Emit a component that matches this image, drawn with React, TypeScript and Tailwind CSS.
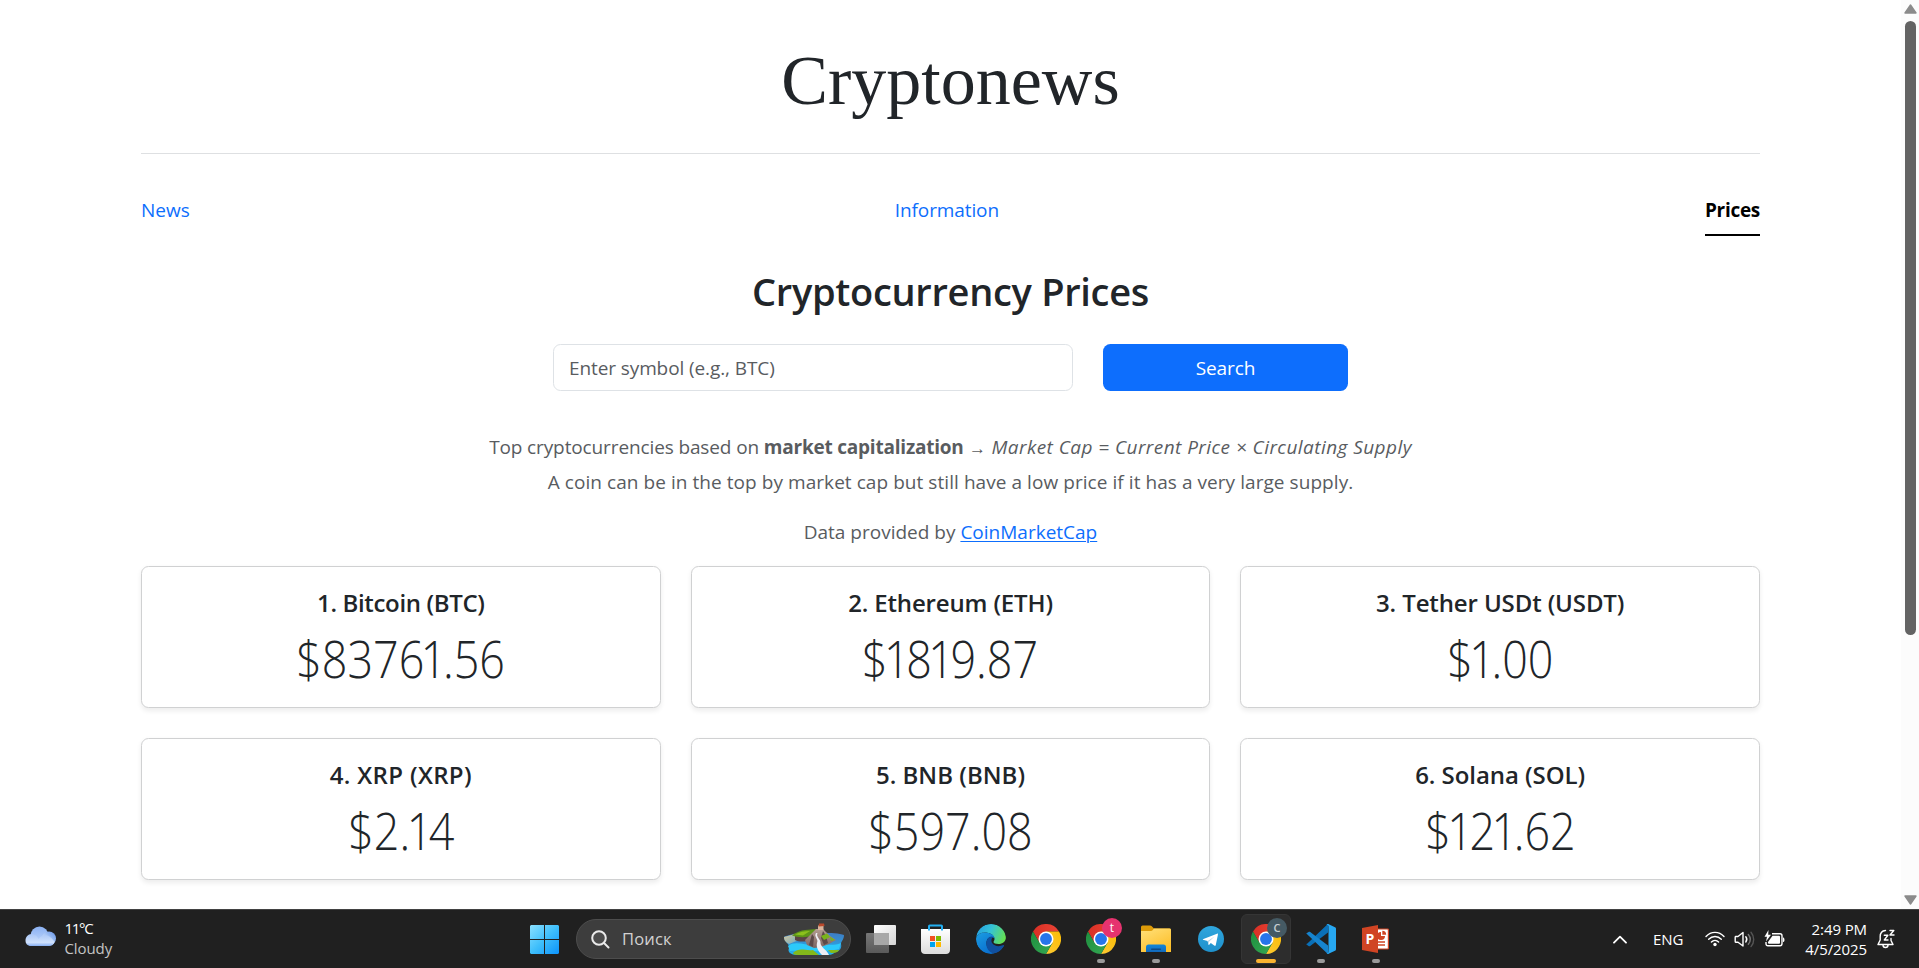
import React from "react";

const coins = [
  { title: "1. Bitcoin (BTC)", price: "$83761.56", tracking: "tracking-[-0.35px]" },
  { title: "2. Ethereum (ETH)", price: "$1819.87", tracking: "tracking-[-0.15px]" },
  { title: "3. Tether USDt (USDT)", price: "$1.00", tracking: "tracking-[-0.12px]" },
  { title: "4. XRP (XRP)", price: "$2.14", tracking: "tracking-[0.35px]" },
  { title: "5. BNB (BNB)", price: "$597.08", tracking: "tracking-[0.02px]" },
  { title: "6. Solana (SOL)", price: "$121.62", tracking: "tracking-[-0.05px]" },
];

function Price({ value }: { value: string }) {
  return (
    <p className="w-max origin-center scale-x-[0.88] text-[51px] leading-[60px] font-light whitespace-nowrap">
      {value.split("").map((c, i) =>
        c === "1" ? (
          <span key={i} className="-ml-[4px] tracking-[-4px]">{c}</span>
        ) : (
          <React.Fragment key={i}>{c}</React.Fragment>
        ),
      )}
    </p>
  );
}

function CoinCard({ title, price, tracking }: { title: string; price: string; tracking: string }) {
  return (
    <div className="flex h-[142px] flex-col items-center rounded-[7.5px] border border-[#d0d1d2] bg-white pt-[21px] shadow-[0_2.5px_5px_rgba(0,0,0,0.075)]">
      <h5 className={`mb-[10px] text-[24px] leading-[30px] font-semibold ${tracking}`}>{title}</h5>
      <Price value={price} />
    </div>
  );
}

function Scrollbar() {
  return (
    <div className="flex w-[18px] shrink-0 flex-col items-center bg-[#fcfcfc] pt-[4px] pb-[4px] pl-px">
      <svg width="13" height="10" viewBox="0 0 13 10">
        <path d="M6.5 1 L12 9 H1 Z" fill="#8b8b8b" stroke="#8b8b8b" strokeWidth="1.4" strokeLinejoin="round" />
      </svg>
      <div className="mt-[7px] h-[614px] w-[11px] rounded-full bg-[#636363]" />
      <svg className="mt-auto" width="13" height="10" viewBox="0 0 13 10">
        <path d="M6.5 9 L12 1 H1 Z" fill="#8b8b8b" stroke="#8b8b8b" strokeWidth="1.4" strokeLinejoin="round" />
      </svg>
    </div>
  );
}

function Page() {
  return (
    <main className="flex flex-1 flex-col pr-[141px] pl-[141px]">
      <header className="flex h-[154px] items-start justify-center border-b border-[#dee0e2] pt-[39px]">
        <h1 className="font-['Liberation_Serif',serif] text-[70px] leading-[84px]">Cryptonews</h1>
      </header>
      <nav className="flex h-[82px] items-end justify-between text-[19px] leading-[30px] text-[#0d6efd]">
        <a className="pb-[11px]">News</a>
        <a className="pr-[1px] pb-[11px] tracking-[-0.1px]">Information</a>
        <a className="border-b-2 border-black pb-[9px] font-bold tracking-[-0.3px] text-black">Prices</a>
      </nav>
      <h2 className="mt-[31px] text-center text-[38px] leading-[48px] font-semibold tracking-[-0.3px]">
        Cryptocurrency Prices
      </h2>
      <form className="mt-[29px] flex h-[47px] justify-center gap-[30px] text-[19px]">
        <input
          className="w-[520px] rounded-[7.5px] border border-[#dee2e6] px-[15px] pt-[2px] tracking-[-0.1px] placeholder:text-[#595c5f] placeholder:opacity-100"
          placeholder="Enter symbol (e.g., BTC)"
        />
        <button type="button" className="w-[245px] rounded-[7.5px] bg-[#0d6efd] pt-[2px] tracking-[-0.1px] text-white">
          Search
        </button>
      </form>
      <div className="mt-[39px] text-center text-[19px] leading-[35px] whitespace-nowrap text-[#595c5f]">
        <p>
          <span className="tracking-[-0.12px]">Top cryptocurrencies based on </span>
          <strong className="tracking-[-0.22px]">market capitalization</strong>{" "}
          <span className="inline-block w-[18px] font-['Liberation_Sans',sans-serif] text-[17px] leading-none">→</span>{" "}
          <em className="tracking-[0.44px]">Market Cap = Current Price × Circulating Supply</em>
        </p>
        <p className="tracking-[0.06px]">
          A coin can be in the top by market cap but still have a low price if it has a very large supply.
        </p>
        <p className="mt-[17px] leading-[30px]">
          Data provided by <a className="text-[#0d6efd] underline decoration-[1.25px] underline-offset-[2px]">CoinMarketCap</a>
        </p>
      </div>
      <section className="mt-[19px] grid grid-cols-3 gap-[30px]">
        {coins.map((c) => (
          <CoinCard key={c.title} {...c} />
        ))}
      </section>
    </main>
  );
}

function Chrome({ id }: { id: string }) {
  return (
    <svg width="30" height="30" viewBox="0 0 48 48">
      <defs>
        <linearGradient id={id + "r"} x1="0" y1="0" x2="1" y2="0">
          <stop offset="0" stopColor="#d93025" />
          <stop offset="1" stopColor="#ea4335" />
        </linearGradient>
        <linearGradient id={id + "y"} x1="1" y1="0" x2="0" y2="1">
          <stop offset="0" stopColor="#fbbc04" />
          <stop offset="1" stopColor="#fcc934" />
        </linearGradient>
        <linearGradient id={id + "g"} x1="1" y1="1" x2="0" y2="0">
          <stop offset="0" stopColor="#34a853" />
          <stop offset="1" stopColor="#1e8e3e" />
        </linearGradient>
      </defs>
      <path d="M24 12 H44.8 A24 24 0 0 0 3.2 12 L13.6 30 L24 24 Z" fill={`url(#${id}r)`} />
      <path d="M34.4 30 L24 48 A24 24 0 0 0 44.8 12 H24 V24 Z" fill={`url(#${id}y)`} />
      <path d="M13.6 30 L3.2 12 A24 24 0 0 0 24 48 L34.4 30 L24 24 Z" fill={`url(#${id}g)`} />
      <circle cx="24" cy="24" r="12" fill="#fff" />
      <circle cx="24" cy="24" r="9.5" fill="#2675eb" />
    </svg>
  );
}

function Edge() {
  return (
    <svg width="30" height="30" viewBox="0 0 30 30">
      <defs>
        <linearGradient id="edgeTop" x1="0" y1="0.3" x2="1" y2="0.6">
          <stop offset="0" stopColor="#249fe0" />
          <stop offset="0.45" stopColor="#35c2d6" />
          <stop offset="1" stopColor="#66e04f" />
        </linearGradient>
        <linearGradient id="edgeLeft" x1="0" y1="0" x2="0.6" y2="1">
          <stop offset="0" stopColor="#1b9de2" />
          <stop offset="1" stopColor="#0a70cf" />
        </linearGradient>
        <clipPath id="edgeClip">
          <circle cx="15" cy="15" r="15" />
        </clipPath>
      </defs>
      <g clipPath="url(#edgeClip)">
        <path d="M0 13 C1 5 7 0 15 0 C24 0 30 6 30 13 C30 17.500 26.500 20 22.500 20 C19.500 20 17.500 19 17.500 18 C17.500 17.200 18.700 16.500 18.500 14.500 C18 10.500 13 8.500 9 8.500 C5 8.500 1.500 10.500 0 13 Z" fill="url(#edgeTop)" />
        <path d="M0 15 C0 11 4 8.500 9 8.500 C14 8.500 18.500 11 18.500 14.700 C17.500 12.500 13.500 12 11.500 15 C8.500 20 12 27 19 29.500 C8 32 0 24 0 15 Z" fill="url(#edgeLeft)" />
        <path d="M11.500 15 C13 12.300 16 12 17.600 13 C15.300 14 14.800 17 16.300 19.300 C18.300 22.300 23 23 27.500 21 C28.300 21 28.300 21.800 28 22.300 C25 27 21 30 17 29.500 C11 27 8.500 20 11.500 15 Z" fill="#10509f" />
      </g>
    </svg>
  );
}

function Windows() {
  return (
    <svg width="29" height="29" viewBox="0 0 29 29">
      <defs>
        <linearGradient id="win" x1="0" y1="0" x2="29" y2="29" gradientUnits="userSpaceOnUse">
          <stop offset="0" stopColor="#8be0ff" />
          <stop offset="0.5" stopColor="#3fbffb" />
          <stop offset="1" stopColor="#0c93fb" />
        </linearGradient>
      </defs>
      <path d="M1 0H14V14H0V1Z M15 0H28L29 1V14H15Z M0 15H14V29H1L0 28Z M15 15H29V28L28 29H15Z" fill="url(#win)" />
    </svg>
  );
}

function Island() {
  return (
    <svg width="62" height="33" viewBox="0 0 62 33">
      <defs>
        <linearGradient id="sea" x1="0" y1="0" x2="0" y2="1">
          <stop offset="0" stopColor="#3f7cc4" />
          <stop offset="1" stopColor="#21b4ee" />
        </linearGradient>
        <linearGradient id="sand" x1="0" y1="0" x2="1" y2="1">
          <stop offset="0" stopColor="#d8c9a0" />
          <stop offset="1" stopColor="#6da6bd" />
        </linearGradient>
        <linearGradient id="rock" x1="0" y1="0" x2="0" y2="1">
          <stop offset="0" stopColor="#b39c91" />
          <stop offset="1" stopColor="#7b6462" />
        </linearGradient>
      </defs>
      <path d="M1 14 C6 10 50 8 61 12 C61 17 58 18 58 21 C59 25 57 28 52 29 C50 32 46 32 42 32 H14 C8 32 4 29 6 25 C7 21 1 19 1 14 Z" fill="url(#sea)" />
      <path d="M1 14 L12 11 L16 17 L6 21 C3 19 1 18 1 14 Z" fill="url(#sand)" />
      <path d="M5 23 C12 17 24 23 32 22 C42 20 48 24 58 20 L56 26 C42 30 24 27 7 28 Z" fill="#2ccafb" />
      <path d="M12 17 C16 19 22 19 28 17 L30 12 L12 13 Z" fill="#5a4447" />
      <path d="M9 12.500 C13 9 18 7.500 22 7 L34 6 L31 11 C26 15 16 15 9 12.500 Z" fill="#5e9519" />
      <path d="M12 11.500 C16 9 22 8 27 8 L20 12.500 Z" fill="#8cc11d" />
      <path d="M33 6 H40 L43 9 L47 13 L53 17 L46 21 L38 24 L31 25 L24 22 L22 17 L28 11 Z" fill="url(#rock)" />
      <path d="M29 11 L26 22 L30 24 L31 14 Z M40 8 L43 13 L45 20 L41 22 L38 15 Z" fill="#5d4a4a" />
      <path d="M38 13 L44 10.500 L47 14 L41 17 Z M47 13.500 L52 17 L48 18 Z" fill="#79b41b" />
      <path d="M35 7 V2.500 H40.500 V7 Z" fill="#d9b49c" />
      <path d="M35.500 3.500 L36 0.500 H41 L41.500 3 Z" fill="#b9492c" />
      <path d="M33 10 C30.500 14 36 16 34 20 C33 24 35 28 39 32 H46 C44 27 37.500 24 37.500 20 C38 16 32.500 14 34.500 10 Z" fill="#eeeef4" />
      <path d="M10 30 C16 24 22 28 30 27 L36 32 H15 C12 32 10 31 10 30 Z M45 27 L56 27 C55 30 50 30 48 30 Z" fill="#84b91b" />
    </svg>
  );
}

function TaskView() {
  return (
    <svg width="30" height="28" viewBox="0 0 30 28">
      <defs>
        <linearGradient id="tv1" x1="0" y1="0" x2="1" y2="1">
          <stop offset="0" stopColor="#fff" />
          <stop offset="1" stopColor="#d5d5d5" />
        </linearGradient>
        <linearGradient id="tv2" x1="0" y1="0" x2="0" y2="1">
          <stop offset="0" stopColor="#777" />
          <stop offset="1" stopColor="#5a5a5a" />
        </linearGradient>
      </defs>
      <rect y="8" width="23" height="20" rx="1" fill="url(#tv2)" />
      <rect x="8" width="22" height="20" rx="1" fill="url(#tv1)" />
      <rect x="8" y="8" width="15" height="12" fill="#a8a8a8" />
    </svg>
  );
}

function Store() {
  return (
    <svg className="mr-px" width="29" height="30" viewBox="0 0 29 30">
      <defs>
        <linearGradient id="bag" x1="0" y1="0" x2="0" y2="1">
          <stop offset="0" stopColor="#fff" />
          <stop offset="1" stopColor="#dcdcdc" />
        </linearGradient>
      </defs>
      <path d="M0 5 H29 V26 C29 28.500 27.500 30 25 30 H4 C1.500 30 0 28.500 0 26 Z" fill="url(#bag)" />
      <path d="M8 6.500 V2.200 Q8 1.500 8.700 1.500 H20.300 Q21 1.500 21 2.200 V6.500" fill="none" stroke="#22aff1" strokeWidth="2" />
      <path d="M9 12 H14 V17 H9Z" fill="#f25022" />
      <path d="M15 12 H20 V17 H15Z" fill="#7fba00" />
      <path d="M9 18 H14 V23 H9Z" fill="#00a4ef" />
      <path d="M15 18 H20 V23 H15Z" fill="#ffb900" />
    </svg>
  );
}

function Explorer() {
  return (
    <svg width="30" height="28" viewBox="0 0 30 28">
      <defs>
        <linearGradient id="folder" x1="0" y1="0" x2="0.6" y2="1">
          <stop offset="0" stopColor="#ffe07a" />
          <stop offset="1" stopColor="#fdc02c" />
        </linearGradient>
        <linearGradient id="dock" x1="0" y1="0" x2="0" y2="1">
          <stop offset="0" stopColor="#1087da" />
          <stop offset="1" stopColor="#1269bb" />
        </linearGradient>
      </defs>
      <path d="M0 7 V2 Q0 0.500 1.500 0.500 H9 Q10 0.500 10.500 1 L13 3.500 H28.500 Q30 3.500 30 5 V8 H0Z" fill="#dd9b09" />
      <path d="M0 6 H10 Q11 6 11.800 5 L13 3.600 H28.500 Q30 3.600 30 5 V27 H0Z" fill="url(#folder)" />
      <path d="M5 27 V22 Q5 19.500 7.500 19.500 H22.500 Q25 19.500 25 22 V27Z" fill="url(#dock)" />
      <rect x="10" y="23.500" width="10" height="1.500" rx="0.700" fill="#0b4a88" />
    </svg>
  );
}

function Telegram() {
  return (
    <svg className="mr-px" width="26" height="26" viewBox="0 0 26 26">
      <defs>
        <linearGradient id="tg" x1="0" y1="0" x2="0" y2="1">
          <stop offset="0" stopColor="#2fa6dd" />
          <stop offset="1" stopColor="#1f91cc" />
        </linearGradient>
      </defs>
      <circle cx="13" cy="13" r="13" fill="url(#tg)" />
      <path d="M4.800 13.200 L19 7.700 C19.900 7.400 20 8 19.900 8.700 L17.800 19 C17.600 19.900 17 20.100 16.200 19.600 L12.800 17.100 L11.200 18.700 C10.800 19 10.500 19 10.500 18.400 L9.600 15 L5 13.700 Z" fill="#fff" />
      <path d="M9.600 15 L16.500 10.500 L11 15.700 L10.600 18.500 Z" fill="#b5d5e8" />
    </svg>
  );
}

function VSCode() {
  return (
    <svg width="30" height="30" viewBox="0 0 30 30">
      <path d="M1.400 19.500 L20.500 1.200 C21.200 0.400 22 0 22.500 0 L22 8.500 L4.200 22 C3.600 22.400 3 22.400 2.500 22 L0.500 20.500 C0 20 0.500 19.900 1.400 19.500Z" fill="#0a70b8" />
      <path d="M1.400 10.500 L20.500 28.800 C21.200 29.600 22 30 22.500 30 L22 21.500 L4.200 8 C3.600 7.600 3 7.600 2.500 8 L0.600 9.300 C0 9.700 0.500 10 1.400 10.500Z" fill="#1684cf" />
      <path d="M22 30 C21.400 30 20.800 29.500 20.500 28.800 C21.500 29.500 22.500 29 22.500 27.500 V2.500 C22.500 1 21.500 0.500 20.500 1.200 C21 0 22 -0.100 22.700 0.200 L29 3.200 C29.700 3.500 30 4 30 4.700 V25.300 C30 26 29.700 26.500 29 26.800 Z" fill="#27a8f2" />
    </svg>
  );
}

function PowerPoint() {
  return (
    <svg className="mr-px" width="27" height="28" viewBox="0 0 27 28">
      <rect x="13" y="4" width="13.400" height="20" rx="0.800" fill="#fff" stroke="#d04423" strokeWidth="1.200" />
      <path d="M19 7 A4 4 0 1 0 23 11 H19 Z" fill="#d04423" />
      <path d="M20.300 5.800 A4 4 0 0 1 24.200 9.700 H20.300 Z" fill="#d04423" />
      <path d="M16 17 H23 M16 20 H23" stroke="#d04423" strokeWidth="1.500" />
      <path d="M0 3 L16 0 V28 L0 25 Z" fill="#d04423" />
      <text x="8" y="19" textAnchor="middle" fontFamily="Open Sans, sans-serif" fontWeight="700" fontSize="14" fill="#fff">P</text>
    </svg>
  );
}

function Cloud() {
  return (
    <svg width="31" height="20" viewBox="0 0 31 20">
      <defs>
        <linearGradient id="c1" x1="0" y1="0" x2="0" y2="1">
          <stop offset="0" stopColor="#8bb1f3" />
          <stop offset="1" stopColor="#c2d8fa" />
        </linearGradient>
        <linearGradient id="c2" x1="1" y1="0" x2="0" y2="1">
          <stop offset="0" stopColor="#5f8fe6" />
          <stop offset="0.600" stopColor="#b9d3f9" />
        </linearGradient>
        <linearGradient id="c3" x1="0" y1="0" x2="0" y2="1">
          <stop offset="0" stopColor="#a9c6f7" />
          <stop offset="0.700" stopColor="#cfe1fc" />
          <stop offset="1" stopColor="#86aef2" />
        </linearGradient>
      </defs>
      <circle cx="14.500" cy="9.500" r="9" fill="url(#c1)" />
      <circle cx="24" cy="12.500" r="7" fill="url(#c2)" />
      <path d="M6.500 8 C10 8 12.500 10.500 13.500 13 C16 10 18 9 20 9 C24 9 28 13 29.500 16 C28.500 18.500 27 20 24 20 H6 C2.500 20 0.500 17.500 0.500 14.500 C0.500 11 3 8 6.500 8 Z" fill="url(#c3)" />
    </svg>
  );
}

function TaskButton({ children, mark }: { children: React.ReactNode; mark?: "idle" | "active" }) {
  return (
    <div className="flex h-[58px] w-[55px] items-center justify-center">
      <div
        className={
          mark === "active"
            ? "relative flex h-[50px] w-[50px] items-center justify-center rounded-[6px] border border-[#353535] bg-[#2d2d2d]"
            : "relative flex h-[50px] w-[50px] items-center justify-center"
        }
      >
        {children}
        {mark === "idle" && <span className="absolute top-[45px] left-[21px] h-[4px] w-[8px] rounded-full bg-[#9a9a9a]" />}
        {mark === "active" && <span className="absolute top-[44px] left-[14px] h-[4px] w-[20px] rounded-full bg-[#fbb330]" />}
      </div>
    </div>
  );
}

function Tray() {
  return (
    <div className="ml-auto flex h-[58px] items-center text-[15px] text-white">
      <svg width="14" height="9" viewBox="0 0 14 9" fill="none" stroke="#fff" strokeWidth="1.800" strokeLinecap="round" strokeLinejoin="round">
        <path d="M1 7.700 L7 1.700 L13 7.700" />
      </svg>
      <span className="ml-[26px] w-[52px] tracking-[-0.1px]">ENG</span>
      <svg width="20" height="16" viewBox="0 0 20 16" fill="none" stroke="#fff" strokeWidth="1.400" strokeLinecap="round">
        <path d="M1 5.500 C6 0 14 0 19 5.500" />
        <path d="M3.700 8.300 C7.200 4.500 12.800 4.500 16.300 8.300" />
        <path d="M6.400 11 C8.500 8.900 11.500 8.900 13.600 11" />
        <circle cx="10" cy="13.500" r="1.700" fill="#fff" stroke="none" />
      </svg>
      <svg className="ml-[9px]" width="22" height="17" viewBox="0 0 22 17" fill="none" stroke="#fff" strokeWidth="1.400" strokeLinecap="round" strokeLinejoin="round">
        <path d="M1.500 5.500 H4 L9 1.500 V15 L4 11.300 H2 Q1.200 11.300 1.200 10.500 V6.200 Q1.200 5.500 2 5.500" />
        <path d="M11.800 5.800 C13 7.300 13 9.500 11.800 11" />
        <path d="M14.300 3.500 C16.800 6.500 16.800 10.300 14.300 13.300" stroke="#777" />
        <path d="M17 1.200 C20.600 5.500 20.600 11.300 17 15.600" stroke="#555" />
      </svg>
      <svg className="ml-[8px]" width="21" height="18" viewBox="0 0 21 18">
        <path d="M8 3.800 H16 Q18 3.800 18 5.800 V13.500 Q18 15.700 16 15.700 H4 Q2 15.700 2 13.500 V12" fill="none" stroke="#fff" strokeWidth="1.400" />
        <path d="M8.500 5.800 H15 Q16 5.800 16 6.800 V12.700 Q16 13.700 15 13.700 H5 Q4 13.700 4 12.700 V12 Z" fill="#fff" />
        <path d="M19 7.500 H19.500 Q20.500 8 20.500 10 Q20.500 11.700 19.500 12 H19Z" fill="#fff" />
        <path d="M4.500 0 L0.500 6.700 H3 L2 11.500 L7 4.700 H4.200 Z" fill="#fff" />
      </svg>
      <div className="ml-[17px] w-[65px] text-right leading-[20px]">
        <div className="tracking-[-0.1px]">2:49 PM</div>
        <div className="tracking-[-0.1px]">4/5/2025</div>
      </div>
      <svg className="ml-[10px]" width="18" height="20" viewBox="0 0 18 20" fill="none" stroke="#fff" strokeWidth="1.400" strokeLinecap="round" strokeLinejoin="round">
        <path d="M8.500 1.500 C5 1.800 3.200 4.500 3.200 7.500 V11 L1 15.500 H16 L14 11.500 V9.500" />
        <path d="M6 16 C6 19.300 11 19.300 11 16" />
        <path d="M7.300 6.300 H10.800 L7.300 11 H11" />
        <path d="M13 1.500 H16.800 L13 6 H17" />
      </svg>
    </div>
  );
}

function Taskbar() {
  return (
    <footer className="flex h-[59px] w-full shrink-0 items-start border-t border-[#424242] bg-[#202020] pr-[24px]">
      <div className="flex h-[58px] w-[530px] pl-[24.500px] text-white">
        <div className="pt-[16px]"><Cloud /></div>
        <div className="pt-[8px] pl-[9px] text-[15px] leading-[20px]">
          <div className="tracking-[-1.300px]">11°C</div>
          <div className="tracking-[-0.1px] text-[#c4c4c4]">Cloudy</div>
        </div>
      </div>
      <div className="flex h-[58px] items-start pt-[15px]"><Windows /></div>
      <div className="mt-[9px] ml-[17px] flex h-[40px] w-[275px] items-center rounded-full border border-[#4d4d4d] bg-[#3d3d3d] pr-[5px] pl-[14px]">
        <svg width="19" height="19" viewBox="0 0 19 19" fill="none" stroke="#eaeaea" strokeWidth="2" strokeLinecap="round">
          <circle cx="8" cy="8" r="6.800" fill="#4c4c4c" />
          <path d="M13 13 L17.500 17.500" />
        </svg>
        <span className="pt-px pl-[12px] text-[16.5px] tracking-[0.15px] text-[#d2d2d2]">Поиск</span>
        <div className="ml-auto"><Island /></div>
      </div>
      <div className="ml-[2.500px] flex">
        <TaskButton><TaskView /></TaskButton>
        <TaskButton><Store /></TaskButton>
        <TaskButton><Edge /></TaskButton>
        <TaskButton><Chrome id="a" /></TaskButton>
        <TaskButton mark="idle">
          <Chrome id="b" />
          <span className="absolute top-[4px] left-[26px] flex h-[20px] w-[20px] items-center justify-center rounded-full bg-[#e6336f] pb-px text-[12px] text-white">t</span>
        </TaskButton>
        <TaskButton mark="idle"><Explorer /></TaskButton>
        <TaskButton><Telegram /></TaskButton>
        <TaskButton mark="active">
          <Chrome id="c" />
          <span className="absolute top-[3px] left-[25px] flex h-[20px] w-[20px] items-center justify-center rounded-full bg-[#455a64] text-[11px] font-semibold text-[#c9d0d4]">C</span>
        </TaskButton>
        <TaskButton mark="idle"><VSCode /></TaskButton>
        <TaskButton mark="idle"><PowerPoint /></TaskButton>
      </div>
      <Tray />
    </footer>
  );
}

export default function App() {
  return (
    <div className="flex h-[968px] w-[1919px] flex-col overflow-hidden bg-white font-['Open_Sans','Noto_Sans',sans-serif] text-[#212529]">
      <div className="flex h-[909px] overflow-hidden">
        <Page />
        <Scrollbar />
      </div>
      <Taskbar />
    </div>
  );
}
